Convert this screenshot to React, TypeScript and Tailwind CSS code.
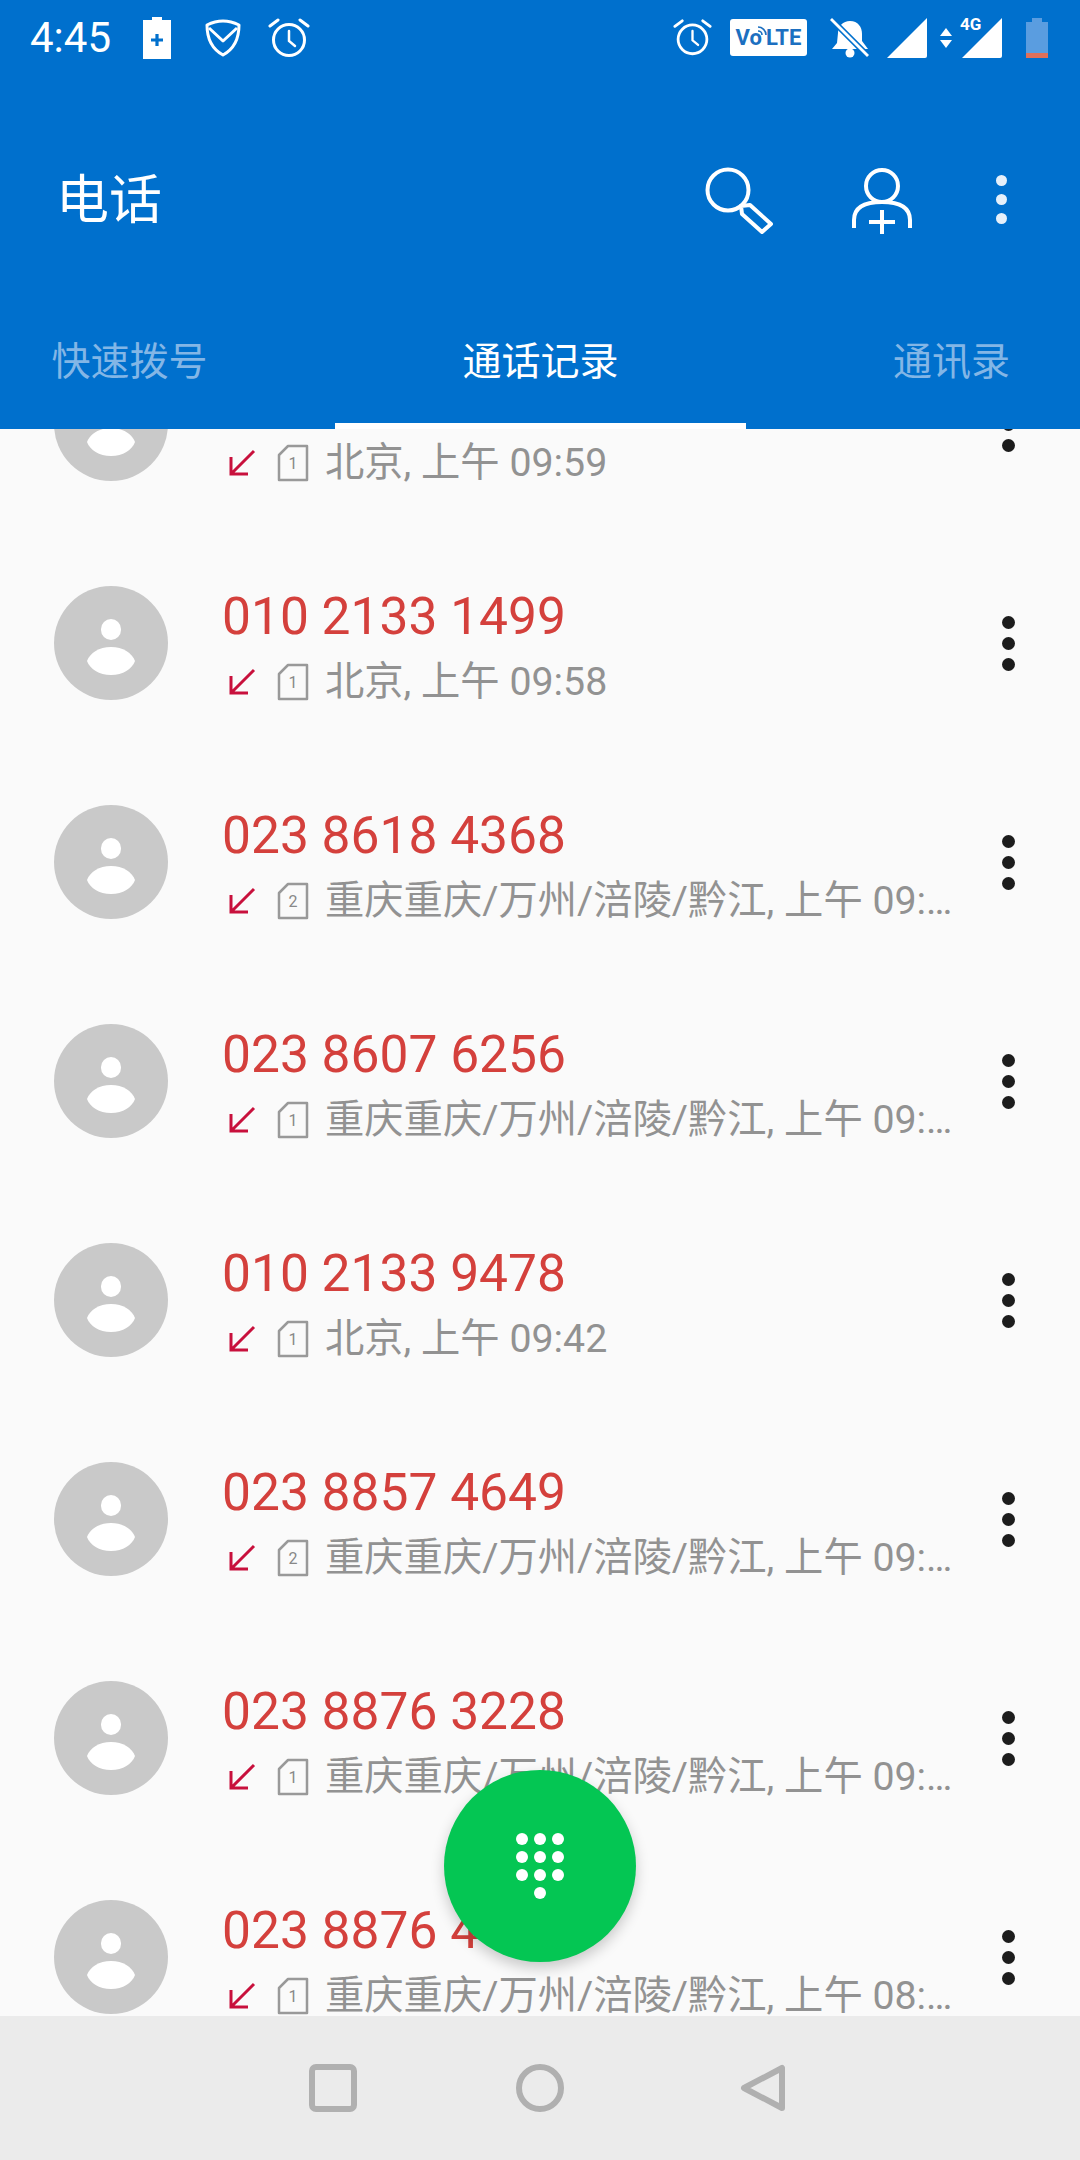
import React from "react";

const LONG = "重庆重庆/万州/涪陵/黔江, 上午 09:…";
const rows = [
  { n: "", sim: 1, t: "北京, 上午 09:59" },
  { n: "010 2133 1499", sim: 1, t: "北京, 上午 09:58" },
  { n: "023 8618 4368", sim: 2, t: LONG },
  { n: "023 8607 6256", sim: 1, t: LONG },
  { n: "010 2133 9478", sim: 1, t: "北京, 上午 09:42" },
  { n: "023 8857 4649", sim: 2, t: LONG },
  { n: "023 8876 3228", sim: 1, t: LONG },
  { n: "023 8876 4105", sim: 1, t: "重庆重庆/万州/涪陵/黔江, 上午 08:…" },
];

function Alarm({ className }: { className: string }) {
  return (
    <svg viewBox="0 0 42 42" className={className} fill="none" stroke="white" strokeWidth="3" strokeLinecap="round">
      <circle cx="21" cy="23" r="15.5" />
      <path d="M21 14v10l6 5" strokeWidth="2.5" />
      <path d="M2 9 10 3M40 9l-8-6" />
    </svg>
  );
}

function Signal({ className }: { className: string }) {
  return (
    <svg viewBox="0 0 40 40" className={className}>
      <path d="M0 40 40 0V38a2 2 0 0 1-2 2Z" fill="white" />
    </svg>
  );
}

function StatusBar() {
  return (
    <div className="h-[75px] flex items-center justify-between pl-[30px] pr-[32px]">
      <div className="flex items-center">
        <span className="text-[42px] leading-none text-white w-[113px]">4:45</span>
        <svg viewBox="0 0 28 42" className="w-[28px] h-[42px]">
          <path d="M9 0h10v3h9v39H0V3h9Z" fill="white" />
          <path d="M14 17v12M8 23h12" stroke="#0070cd" strokeWidth="3.2" />
        </svg>
        <svg viewBox="0 0 36 38" className="w-[36px] h-[38px] ml-[34px]" fill="none" stroke="white" strokeWidth="3" strokeLinejoin="round">
          <path d="M18 2c6 0 11 1.500 16 4 0 14-5 24-16 30C7 30 2 20 2 6c5-2.500 10-4 16-4Z" />
          <path d="M4 9l14 13L32 9" />
        </svg>
        <Alarm className="w-[42px] h-[42px] ml-[27px]" />
      </div>
      <div className="flex items-center">
        <Alarm className="w-[39px] h-[39px]" />
        <div className="relative w-[77px] h-[37px] ml-[18px] bg-white rounded-[3px] flex items-center justify-center text-[#1c6fc0] text-[22px] font-bold leading-none">
          <span>Vo</span>
          <span className="ml-[4px]">LTE</span>
          <svg viewBox="0 0 10 10" className="absolute left-[27px] top-[7px] w-[10px] h-[10px]" fill="none" stroke="#1c6fc0" strokeWidth="1.600">
            <path d="M1 5a4 4 0 0 1 4 4M1 1a8 8 0 0 1 8 8" />
          </svg>
        </div>
        <svg viewBox="0 0 40 40" className="w-[40px] h-[40px] ml-[23px]">
          <path d="M20 3c8 0 12 6 12 13v7l6 8H2l5-6 1-10C8 8 13 3 20 3Z" fill="white" />
          <circle cx="20" cy="35" r="4.500" fill="white" />
          <path d="M1 1 38 38" stroke="#0070cd" strokeWidth="6" />
          <path d="M1 1 38 38" stroke="white" strokeWidth="2.800" />
        </svg>
        <Signal className="w-[40px] h-[40px] ml-[17px]" />
        <svg viewBox="0 0 12 20" className="w-[12px] h-[20px] ml-[13px]">
          <path d="M6 0 12 8H0ZM6 20 0 12h12Z" fill="white" />
        </svg>
        <div className="relative ml-[10px]">
          <Signal className="w-[40px] h-[40px]" />
          <span className="absolute -left-[2px] -top-[2px] text-[17px] leading-none font-bold text-white">4G</span>
        </div>
        <div className="ml-[24px] w-[22px] h-[40px] flex flex-col items-center">
          <div className="w-[10px] h-[4px] bg-[#5a9de0]" />
          <div className="w-[22px] h-[36px] bg-[#5a9de0] flex flex-col justify-end">
            <div className="h-[5px] bg-[#e0705a]" />
          </div>
        </div>
      </div>
    </div>
  );
}

function Toolbar() {
  return (
    <div className="h-[250px] flex items-center pl-[56px]">
      <span className="text-[53px] mt-[2px] leading-none text-white flex-1">电话</span>
      <svg viewBox="0 0 68 68" className="w-[68px] h-[68px] mt-[1px]" fill="none" stroke="white" strokeWidth="4">
        <circle cx="23" cy="23" r="20.500" />
        <path d="M36 39 45 38 66 57 57 65 37 47Z" strokeLinejoin="round" />
      </svg>
      <svg viewBox="0 0 60 68" className="w-[60px] h-[68px] mt-[3px] ml-[79px]" fill="none" stroke="white" strokeWidth="4">
        <circle cx="30" cy="18" r="16" />
        <path d="M2 60V52C2 40 12 34 30 34s28 6 28 18v8" />
        <path d="M30 42V66M17 54H43" />
      </svg>
      <div className="w-[11px] ml-[84px] mr-[73px] -mt-[1px] flex flex-col gap-[8px]">
        <div className="w-[11px] h-[11px] rounded-full bg-[#e6f0fa]" />
        <div className="w-[11px] h-[11px] rounded-full bg-[#e6f0fa]" />
        <div className="w-[11px] h-[11px] rounded-full bg-[#e6f0fa]" />
      </div>
    </div>
  );
}

function Tabs() {
  return (
    <div className="h-[104px] flex -ml-[76px] w-[1233px] text-[39px] leading-none">
      <div className="w-[411px] flex items-center justify-center pb-[30px] text-[#83b6e6]">快速拨号</div>
      <div className="w-[411px] flex items-center justify-center pb-[24px] text-white border-b-[6px] border-white">通话记录</div>
      <div className="w-[411px] flex items-center justify-center pb-[30px] text-[#83b6e6]">通讯录</div>
    </div>
  );
}

function Row({ n, sim, t }: { n: string; sim: number; t: string }) {
  return (
    <div className="h-[219px] flex items-center pl-[54px]">
      <div className="w-[114px] h-[114px] rounded-full bg-[#c9c9c9] flex flex-col items-center pt-[33px] shrink-0">
        <div className="w-[20px] h-[21px] rounded-full bg-white" />
        <svg viewBox="0 0 48 28" className="w-[48px] h-[28px] mt-[7px]" fill="white">
          <path d="M0 14C3 6 12 0 24 0s21 6 24 14c-3 8-12 14-24 14S3 22 0 14Z" />
        </svg>
      </div>
      <div className="ml-[54px] w-[727px] min-w-0 pt-[14px]">
        <div className="h-[60px] -mt-[3px] text-[51.5px] leading-[60px] text-[#d4403c]">{n}</div>
        <div className="h-[56px] mt-[7px] flex items-center">
          <svg viewBox="0 0 28 28" className="w-[28px] h-[28px] ml-[6px] shrink-0" fill="none" stroke="#c8103c" strokeWidth="3">
            <path d="M26 2 3 25M3 8V25H20" />
          </svg>
          <svg viewBox="0 0 32 38" className="w-[32px] h-[38px] ml-[21px] shrink-0" fill="none" stroke="#999" strokeWidth="2.500">
            <path d="M11 2H30V36H2V11Z" strokeLinejoin="round" />
            <text x="16" y="25" textAnchor="middle" fontSize="16" fontFamily="Roboto" fill="#888" stroke="none">{sim}</text>
          </svg>
          <span className="ml-[16px] whitespace-nowrap text-[39.3px] leading-[56px] text-[#929292]">{t}</span>
        </div>
      </div>
      <div className="ml-[53px] mt-[2px] w-[13px] flex flex-col gap-[8px] shrink-0">
        <div className="w-[13px] h-[13px] rounded-full bg-[#1c1c1c]" />
        <div className="w-[13px] h-[13px] rounded-full bg-[#1c1c1c]" />
        <div className="w-[13px] h-[13px] rounded-full bg-[#1c1c1c]" />
      </div>
    </div>
  );
}

function DialPad() {
  return (
    <svg viewBox="0 0 48 66" className="w-[48px] h-[66px]" fill="white">
      {[0, 18, 36].flatMap((y) => [6, 24, 42].map((x) => <circle key={`${x}-${y}`} cx={x} cy={y + 6} r="6" />))}
      <circle cx="24" cy="60" r="6" />
    </svg>
  );
}

export default function App() {
  return (
    <div className="w-[1080px] h-[2160px] flex flex-col overflow-hidden bg-[#fafafa] relative font-['Roboto','Noto_Sans_CJK_SC',sans-serif]">
      <div className="h-[429px] shrink-0 bg-[#0070cd] z-10 overflow-hidden">
        <StatusBar />
        <Toolbar />
        <Tabs />
      </div>
      <div className="flex-1 min-h-0 overflow-hidden relative">
        <div className="-mt-[115px]">
          {rows.map((r, i) => (
            <Row key={i} {...r} />
          ))}
        </div>
        <div className="absolute left-[444px] top-[1341px] w-[192px] h-[192px] rounded-full bg-[#04c653] shadow-[0_6px_14px_rgba(0,0,0,0.2)] flex items-center justify-center">
          <DialPad />
        </div>
      </div>
      <div className="h-[144px] shrink-0 bg-[#ebebeb] flex items-center pl-[309px] z-10">
        <div className="w-[48px] h-[48px] rounded-[7px] border-[6px] border-[#b0b0b0]" />
        <div className="w-[48px] h-[48px] rounded-full border-[6px] border-[#b0b0b0] ml-[159px]" />
        <svg viewBox="0 0 46 48" className="w-[46px] h-[48px] ml-[176px]" fill="none" stroke="#b0b0b0" strokeWidth="6" strokeLinejoin="round">
          <path d="M42 4V44L4 24Z" />
        </svg>
      </div>
    </div>
  );
}
